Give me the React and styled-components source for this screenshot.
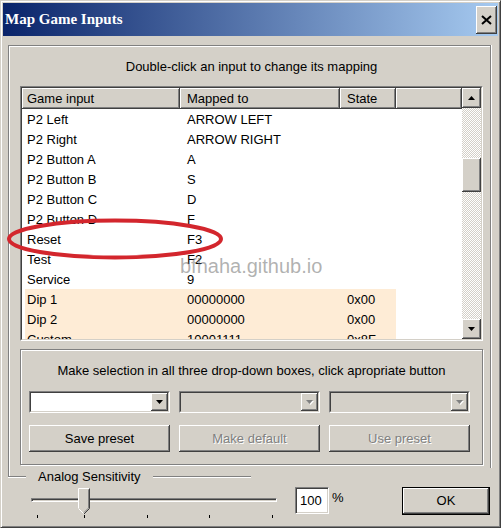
import styled, { createGlobalStyle } from "styled-components";

const GlobalStyle = createGlobalStyle`
  html, body {
    margin: 0;
    padding: 0;
    background: #d4d0c8;
  }
  body {
    font-family: "Liberation Sans", Arial, sans-serif;
    font-size: 13px;
    color: #000;
  }
`;

const inputs = [
  { name: "P2 Left", key: "ARROW LEFT" },
  { name: "P2 Right", key: "ARROW RIGHT" },
  { name: "P2 Button A", key: "A" },
  { name: "P2 Button B", key: "S" },
  { name: "P2 Button C", key: "D" },
  { name: "P2 Button D", key: "F" },
  { name: "Reset", key: "F3" },
  { name: "Test", key: "F2" },
  { name: "Service", key: "9" },
  { name: "Dip 1", key: "00000000", state: "0x00", dip: true },
  { name: "Dip 2", key: "00000000", state: "0x00", dip: true },
  { name: "Custom", key: "10001111", state: "0x8F", dip: true },
];

const ticks = [6, 53, 116, 178, 241];

const raised = `
  box-shadow: inset -1px -1px #404040, inset 1px 1px #fff, inset -2px -2px #808080;
`;

const Arrow = ({ up, disabled }) => (
  <svg width="8" height="5" viewBox="0 0 8 5">
    {disabled && <polygon points="1,1 8,1 4.5,5" fill="#fff" />}
    <polygon
      points={up ? "0,4 7,4 3.5,0" : "0,0 7,0 3.5,4"}
      fill={disabled ? "#808080" : "#000"}
    />
  </svg>
);

const App = () => {
  return (
    <>
      <GlobalStyle />
      <Window>
        <TitleBar>
          <Title>Map Game Inputs</Title>
          <CloseButton>
            <svg width="11" height="10" viewBox="0 0 11 10">
              <path d="M1 1 L10 9 M10 1 L1 9" stroke="#000" strokeWidth="2" />
            </svg>
          </CloseButton>
        </TitleBar>

        <Content>
          <MainGroup>
            <Caption>Double-click an input to change its mapping</Caption>
            <ListFrame>
              <ListInner>
                <Table>
                  <HeaderRow>
                    <HeadCell $first>Game input</HeadCell>
                    <HeadCell>Mapped to</HeadCell>
                    <HeadCell>State</HeadCell>
                    <HeadCell />
                  </HeaderRow>
                  {inputs.map((item) => (
                    <Row key={item.name} $dip={item.dip}>
                      <Cell $first>{item.name}</Cell>
                      <Cell>{item.key}</Cell>
                      <Cell>{item.state}</Cell>
                      <Cell />
                    </Row>
                  ))}
                </Table>
                <ScrollBar>
                  <ScrollButton>
                    <Arrow up />
                  </ScrollButton>
                  <Thumb />
                  <ScrollButton $bottom>
                    <Arrow />
                  </ScrollButton>
                </ScrollBar>
              </ListInner>
            </ListFrame>

            <PresetGroup>
              <Caption>
                Make selection in all three drop-down boxes, click apropriate
                button
              </Caption>
              <Grid3>
                <Combo>
                  <ComboInner>
                    <ComboField />
                    <DropButton>
                      <Arrow />
                    </DropButton>
                  </ComboInner>
                </Combo>
                <Combo>
                  <ComboInner $disabled>
                    <ComboField />
                    <DropButton>
                      <Arrow disabled />
                    </DropButton>
                  </ComboInner>
                </Combo>
                <Combo>
                  <ComboInner $disabled>
                    <ComboField />
                    <DropButton>
                      <Arrow disabled />
                    </DropButton>
                  </ComboInner>
                </Combo>
              </Grid3>
              <Grid3 $buttons>
                <Button>Save preset</Button>
                <Button $disabled>Make default</Button>
                <Button $disabled>Use preset</Button>
              </Grid3>
            </PresetGroup>
          </MainGroup>

          <LegendRow>
            <LegendLine $left />
            <Legend>Analog Sensitivity</Legend>
            <LegendLine />
          </LegendRow>

          <BottomRow>
            <Slider>
              <Track />
              <ThumbHandle>
                <svg width="13" height="27" viewBox="0 0 13 27">
                  <polygon points="0,0 12,0 12,20 6,26 0,20" fill="#d4d0c8" />
                  <polyline points="0.5,20 0.5,0.5 11.5,0.5" stroke="#fff" fill="none" />
                  <polyline points="11.5,0.5 11.5,20.5 6,26" stroke="#404040" fill="none" />
                  <polyline points="10.5,1.5 10.5,20 6,24.5" stroke="#808080" fill="none" />
                  <polyline points="0.5,20.5 5.5,25.5" stroke="#fff" fill="none" />
                </svg>
              </ThumbHandle>
              {ticks.map((t) => (
                <Tick key={t} $left={t} />
              ))}
            </Slider>
            <Edit>100</Edit>
            <Percent>%</Percent>
            <OkButton>
              <OkInner>OK</OkInner>
            </OkButton>
          </BottomRow>
        </Content>

        <Ellipse width="220" height="44" viewBox="0 0 220 44">
          <ellipse cx="110" cy="21" rx="106" ry="18.5" fill="none" stroke="#d3262d" strokeWidth="4" />
        </Ellipse>
        <Watermark>bfhaha.github.io</Watermark>
      </Window>
    </>
  );
};

const Window = styled.div`
  position: relative;
  width: 501px;
  height: 528px;
  box-sizing: border-box;
  background: #d4d0c8;
  border: 1px solid;
  border-color: #d4d0c8 #404040 #404040 #d4d0c8;
  box-shadow: inset 1px 1px #fff, inset -1px -1px #808080;
  padding: 2px;
  overflow: hidden;
`;

const TitleBar = styled.div`
  height: 33px;
  display: flex;
  align-items: center;
  justify-content: space-between;
  padding: 0 1px 0 2px;
  background: linear-gradient(to right, #0a246a, #a6caf0);
`;

const Title = styled.span`
  font: bold 15px "Liberation Serif", "Times New Roman", serif;
  color: #fff;
`;

const CloseButton = styled.div`
  width: 21px;
  height: 28px;
  box-sizing: border-box;
  background: #d4d0c8;
  display: flex;
  align-items: center;
  justify-content: center;
  ${raised}
`;

const Content = styled.div`
  padding: 9px 7px 0 5px;
`;

const MainGroup = styled.div`
  height: 423px;
  box-sizing: border-box;
  border: 1px solid #808080;
  border-bottom: none;
  box-shadow: inset 1px 1px #fff, 1px 0 0 #fff;
  padding: 0 7px 0 11px;
`;

const Caption = styled.div`
  padding: 13px 0 11px;
  line-height: 16px;
  text-align: center;
  white-space: nowrap;
`;

const ListFrame = styled.div`
  height: 255px;
  box-sizing: border-box;
  border: 1px solid;
  border-color: #808080 #fff #fff #808080;
`;

const ListInner = styled.div`
  height: 100%;
  box-sizing: border-box;
  border: 1px solid;
  border-color: #404040 #d4d0c8 #d4d0c8 #404040;
  background: #fff;
  display: flex;
`;

const Table = styled.div`
  flex: 1;
  overflow: hidden;
`;

const columns = "158px 160px 56px 1fr";

const HeaderRow = styled.div`
  display: grid;
  grid-template-columns: ${columns};
  height: 21px;
`;

const HeadCell = styled.div`
  box-sizing: border-box;
  background: #d4d0c8;
  border-right: 1px solid #404040;
  border-bottom: 1px solid #404040;
  box-shadow: inset 1px 1px #fff, inset -1px -1px #808080;
  padding: 2px 0 0 ${(p) => (p.$first ? 5 : 7)}px;
  line-height: 18px;
  white-space: nowrap;
`;

const Row = styled.div`
  display: grid;
  grid-template-columns: ${columns};
  height: 20px;
  box-sizing: border-box;
  padding-top: 2px;
  line-height: 18px;
  background: ${(p) =>
    p.$dip
      ? "linear-gradient(90deg, transparent 3px, #feecd6 3px, #feecd6 374px, transparent 374px)"
      : "none"};
`;

const Cell = styled.div`
  padding-left: ${(p) => (p.$first ? 5 : 7)}px;
  white-space: nowrap;
`;

const ScrollBar = styled.div`
  width: 19px;
  display: flex;
  flex-direction: column;
  background-color: #fff;
  background-image: conic-gradient(#d4d0c8 25%, #fff 0 50%, #d4d0c8 0 75%, #fff 0);
  background-size: 2px 2px;
`;

const ScrollButton = styled.div`
  height: 20px;
  background: #d4d0c8;
  display: flex;
  align-items: center;
  justify-content: center;
  margin-top: ${(p) => (p.$bottom ? "auto" : "0")};
  ${raised}
`;

const Thumb = styled.div`
  height: 34px;
  margin-top: 50px;
  background: #d4d0c8;
  ${raised}
`;

const PresetGroup = styled.div`
  margin-top: 8px;
  height: 116px;
  box-sizing: border-box;
  border: 1px solid #808080;
  box-shadow: inset 1px 1px #fff, 1px 1px 0 #fff;
  padding: 0 8px;
`;

const Grid3 = styled.div`
  display: grid;
  grid-template-columns: 141px 141px 141px;
  column-gap: 9px;
  margin-top: ${(p) => (p.$buttons ? 12 : 1)}px;
`;

const Combo = styled.div`
  height: 22px;
  box-sizing: border-box;
  border: 1px solid;
  border-color: #808080 #fff #fff #808080;
`;

const ComboInner = styled.div`
  height: 100%;
  box-sizing: border-box;
  border: 1px solid;
  border-color: #404040 #d4d0c8 #d4d0c8 #404040;
  background: ${(p) => (p.$disabled ? "#d4d0c8" : "#fff")};
  display: flex;
`;

const ComboField = styled.div`
  flex: 1;
`;

const DropButton = styled.div`
  width: 17px;
  background: #d4d0c8;
  display: flex;
  align-items: center;
  justify-content: center;
  ${raised}
`;

const Button = styled.div`
  height: 27px;
  line-height: 27px;
  text-align: center;
  background: #d4d0c8;
  color: ${(p) => (p.$disabled ? "#808080" : "#000")};
  text-shadow: ${(p) => (p.$disabled ? "1px 1px #fff" : "none")};
  ${raised}
`;

const LegendRow = styled.div`
  display: flex;
  height: 16px;
`;

const LegendLine = styled.div`
  width: ${(p) => (p.$left ? 18 : 98)}px;
  height: 9px;
  box-sizing: border-box;
  border-bottom: 1px solid #808080;
  border-left: ${(p) => (p.$left ? "1px solid #808080" : "none")};
  box-shadow: ${(p) => (p.$left ? "inset 1px 0 #fff, " : "")}0 1px 0 #fff;
`;

const Legend = styled.div`
  padding: 0 12px;
  line-height: 16px;
  margin-top: 1px;
`;

const BottomRow = styled.div`
  display: flex;
  align-items: flex-start;
  margin-top: 3px;
  padding-left: 23px;
`;

const Slider = styled.div`
  position: relative;
  width: 246px;
  height: 33px;
`;

const Track = styled.div`
  position: absolute;
  top: 11px;
  left: 0;
  right: 0;
  height: 4px;
  box-sizing: border-box;
  border: 1px solid;
  border-color: #808080 #fff #fff #808080;
  box-shadow: inset 1px 1px #404040;
`;

const ThumbHandle = styled.div`
  position: absolute;
  left: 47px;
  top: 1px;
  line-height: 0;
`;

const Tick = styled.div`
  position: absolute;
  top: 28px;
  left: ${(p) => p.$left}px;
  width: 1px;
  height: 3px;
  background: #000;
`;

const Edit = styled.div`
  margin-left: 18px;
  width: 34px;
  height: 27px;
  box-sizing: border-box;
  border: 1px solid;
  border-color: #808080 #fff #fff #808080;
  box-shadow: inset 1px 1px #404040, inset -1px -1px #d4d0c8;
  background: #fff;
  padding-left: 4px;
  line-height: 25px;
`;

const Percent = styled.div`
  margin-left: 3px;
  line-height: 22px;
`;

const OkButton = styled.div`
  margin-left: auto;
  margin-right: 1px;
  width: 88px;
  height: 28px;
  box-sizing: border-box;
  border: 1px solid #000;
`;

const OkInner = styled.div`
  height: 100%;
  line-height: 26px;
  text-align: center;
  background: #d4d0c8;
  ${raised}
`;

const Ellipse = styled.svg`
  position: absolute;
  left: 4px;
  top: 217px;
`;

const Watermark = styled.div`
  position: absolute;
  left: 179px;
  top: 255px;
  font-size: 20px;
  line-height: 20px;
  color: rgba(100, 100, 100, 0.5);
`;

export default App;
